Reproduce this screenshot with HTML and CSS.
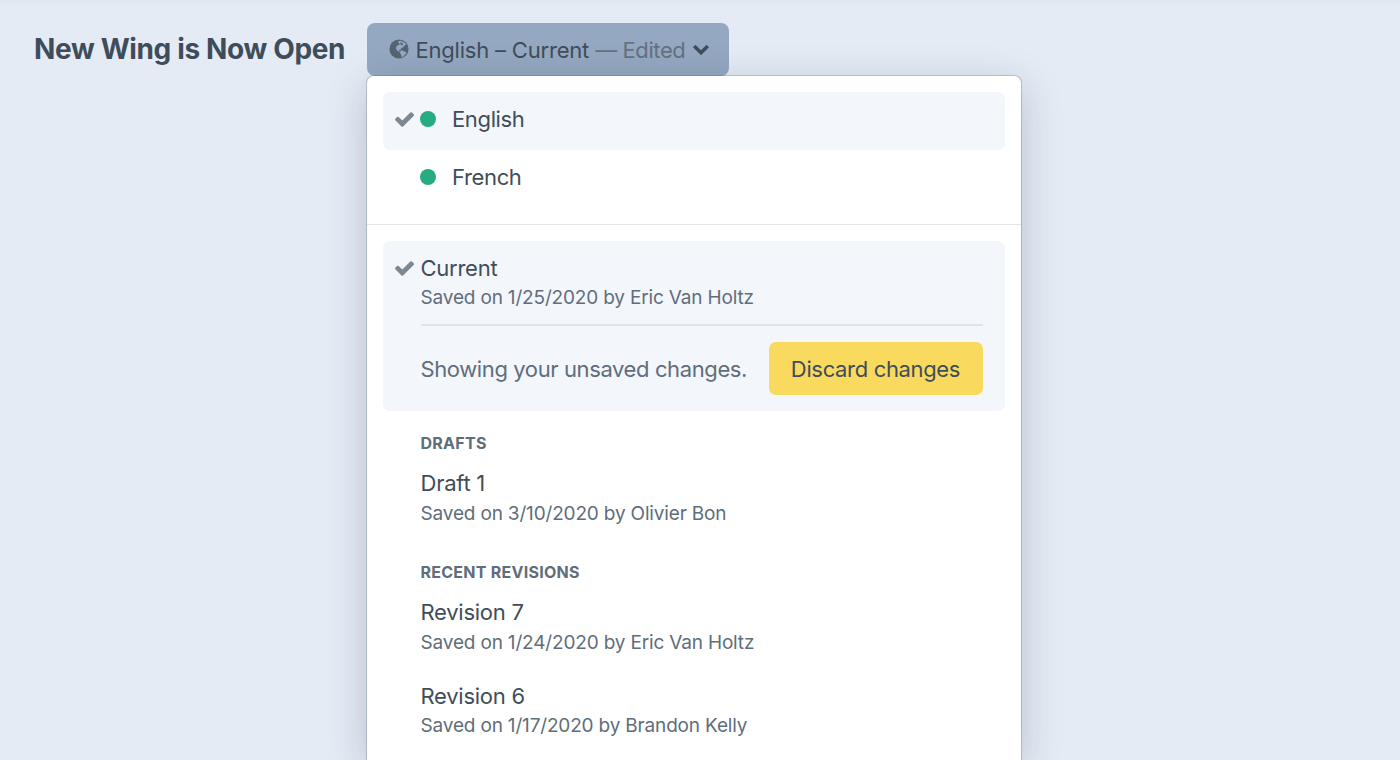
FILE: index.html
```html
<!DOCTYPE html>
<html lang="en">
<head>
<meta charset="utf-8">
<title>New Wing is Now Open</title>
<link rel="stylesheet" href="styles.css">
</head>
<body>
<header class="header">
  <h1 class="title">New Wing is Now Open</h1>
  <div class="context">
    <button class="context-btn">
      <svg class="globe" viewBox="0 0 20 20"><circle cx="10" cy="10" r="9.6" fill="currentColor"/><path class="land" d="M9 2.2 12 1.8 14 3l2 .8 1.2 2-1.7.8-1.2 1.7-2 1-.8 1.4-1.8.2.2 1.2 1.5.6-1 .5-2-1.3-1.500-2.300.5-2.300L9.500 6l1.500-.8-1.200-1.300zM11.300 12l2-.8 2 1.200 2.200.8-.8 2.100-1.700 1.500-2.200 1.900-.5-2.400-1.200-2z"/><path d="m11 3.600 2.300.2.7 2.200-2 .2z" fill="currentColor"/></svg>
      <span class="context-label">English – Current</span><span class="edited">— Edited</span>
      <svg class="chevron" viewBox="90 533 1612 1036"><path fill="currentColor" d="M1683 808l-742 741q-19 19-45 19t-45-19l-742-741q-19-19-19-45.500t19-45.500l166-165q19-19 45-19t45 19l531 531 531-531q19-19 45-19t45 19l166 165q19 19 19 45.500t-19 45.500z"/></svg>
    </button>
    <div class="menu">
      <ul class="sites">
        <li class="site selected"><svg class="check" viewBox="121 334 1550 1188"><path fill="currentColor" d="M1671 566q0 40-28 68l-724 724-136 136q-28 28-68 28t-68-28l-136-136-362-362q-28-28-28-68t28-68l136-136q28-28 68-28t68 28l294 295 656-657q28-28 68-28t68 28l136 136q28 28 28 68z"/></svg><span class="status"></span><span>English</span></li>
        <li class="site"><span class="status"></span><span>French</span></li>
      </ul>
      <div class="revisions">
        <section class="current selected">
          <svg class="check" viewBox="121 334 1550 1188"><path fill="currentColor" d="M1671 566q0 40-28 68l-724 724-136 136q-28 28-68 28t-68-28l-136-136-362-362q-28-28-28-68t28-68l136-136q28-28 68-28t68 28l294 295 656-657q28-28 68-28t68 28l136 136q28 28 28 68z"/></svg>
          <div class="name">Current</div>
          <div class="meta">Saved on 1/25/2020 by Eric Van Holtz</div>
          <div class="unsaved"><span>Showing your unsaved changes.</span><button class="discard">Discard changes</button></div>
        </section>
        <h2 class="group">Drafts</h2>
        <div class="revision"><div class="name">Draft 1</div><div class="meta">Saved on 3/10/2020 by Olivier Bon</div></div>
        <h2 class="group recent">Recent Revisions</h2>
        <div class="revision"><div class="name">Revision 7</div><div class="meta">Saved on 1/24/2020 by Eric Van Holtz</div></div>
        <div class="revision"><div class="name">Revision 6</div><div class="meta">Saved on 1/17/2020 by Brandon Kelly</div></div>
      </div>
    </div>
  </div>
</header>
</body>
</html>
```
FILE: styles.css
```css
* { box-sizing: border-box; }
html { height: 100%; overflow: hidden; }
body { margin: 0; height: 100%; overflow: hidden; background: linear-gradient(#e0e7f1, #e4ebf5 8px); color: #3f4d5a; font-family: Inter, sans-serif; font-size: 22px; letter-spacing: -.25px; }
.header { display: flex; height: 100%; padding: 23px 34px 0; gap: 22px; }
.title { margin: 0; width: 311px; font-size: 28px; line-height: 52px; letter-spacing: -.36px; white-space: nowrap; }
.context { position: relative; }
.context-btn { display: flex; align-items: center; width: 361.5px; height: 53px; padding: 0 19px 0 21.5px; border: 0; border-radius: 8px; background: #94a8c1; color: #3f4d5a; font: 22px Inter, sans-serif; letter-spacing: -.2px; white-space: nowrap; }
.globe { flex: none; width: 20px; height: 20px; margin: -2px 7px 0 0; color: #556472; }
.land { fill: #94a8c1; }
.edited { margin-left: 6px; color: #64717f; letter-spacing: -.4px; }
.chevron { flex: none; width: 16px; height: 10px; margin-left: 8px; }
.menu { position: absolute; top: 53px; left: 0; width: 653.5px; height: 684px; background: #fff; border-radius: 7px 7px 0 0; box-shadow: 0 0 0 1px rgba(80,100,125,.28), 0 10px 40px rgba(31,41,51,.22); clip-path: inset(-53px -60px 0 -60px); }
.sites { list-style: none; margin: 0; padding: 16px; height: 149px; border-bottom: 1px solid #e2e5e9; }
.site { position: relative; display: flex; height: 58px; padding: 0 0 5px 37px; align-items: center; border-radius: 7px; letter-spacing: -.36px; }
.selected { background: #f3f6fb; }
.status { width: 16px; height: 16px; margin-right: 16px; border-radius: 50%; background: #27ab83; }
.check { position: absolute; left: 12px; top: 20px; width: 19px; height: 15px; color: #7b8793; }
.revisions { padding: 16px; }
.current { position: relative; height: 170px; padding: 12px 22px 0 37.5px; border-radius: 7px; }
.name { line-height: 30px; }
.meta { padding-top: 1px; font-size: 19px; line-height: 28px; letter-spacing: -.17px; color: #606d7b; }
.unsaved { display: flex; justify-content: space-between; align-items: center; margin-top: 12px; padding-top: 16px; border-top: 2px solid #dfe4ec; color: #606d7b; letter-spacing: -.39px; white-space: nowrap; }
.discard { flex: none; width: 214px; height: 53px; border: 0; border-radius: 7px; background: #fad95f; color: #3f4d5a; font: 22px Inter, sans-serif; letter-spacing: -.34px; }
.group { margin: 22px 37.5px 15px; font-size: 16px; line-height: 20px; letter-spacing: .26px; text-transform: uppercase; color: #606d7b; }
.group.recent { margin-top: 11px; }
.revision { height: 83px; padding: 0 37.5px; }
.revision .meta { padding-top: 2px; }
.revision:last-child { height: auto; padding-top: 1px; }
.revision:last-child .meta { padding-top: 1px; }
```
